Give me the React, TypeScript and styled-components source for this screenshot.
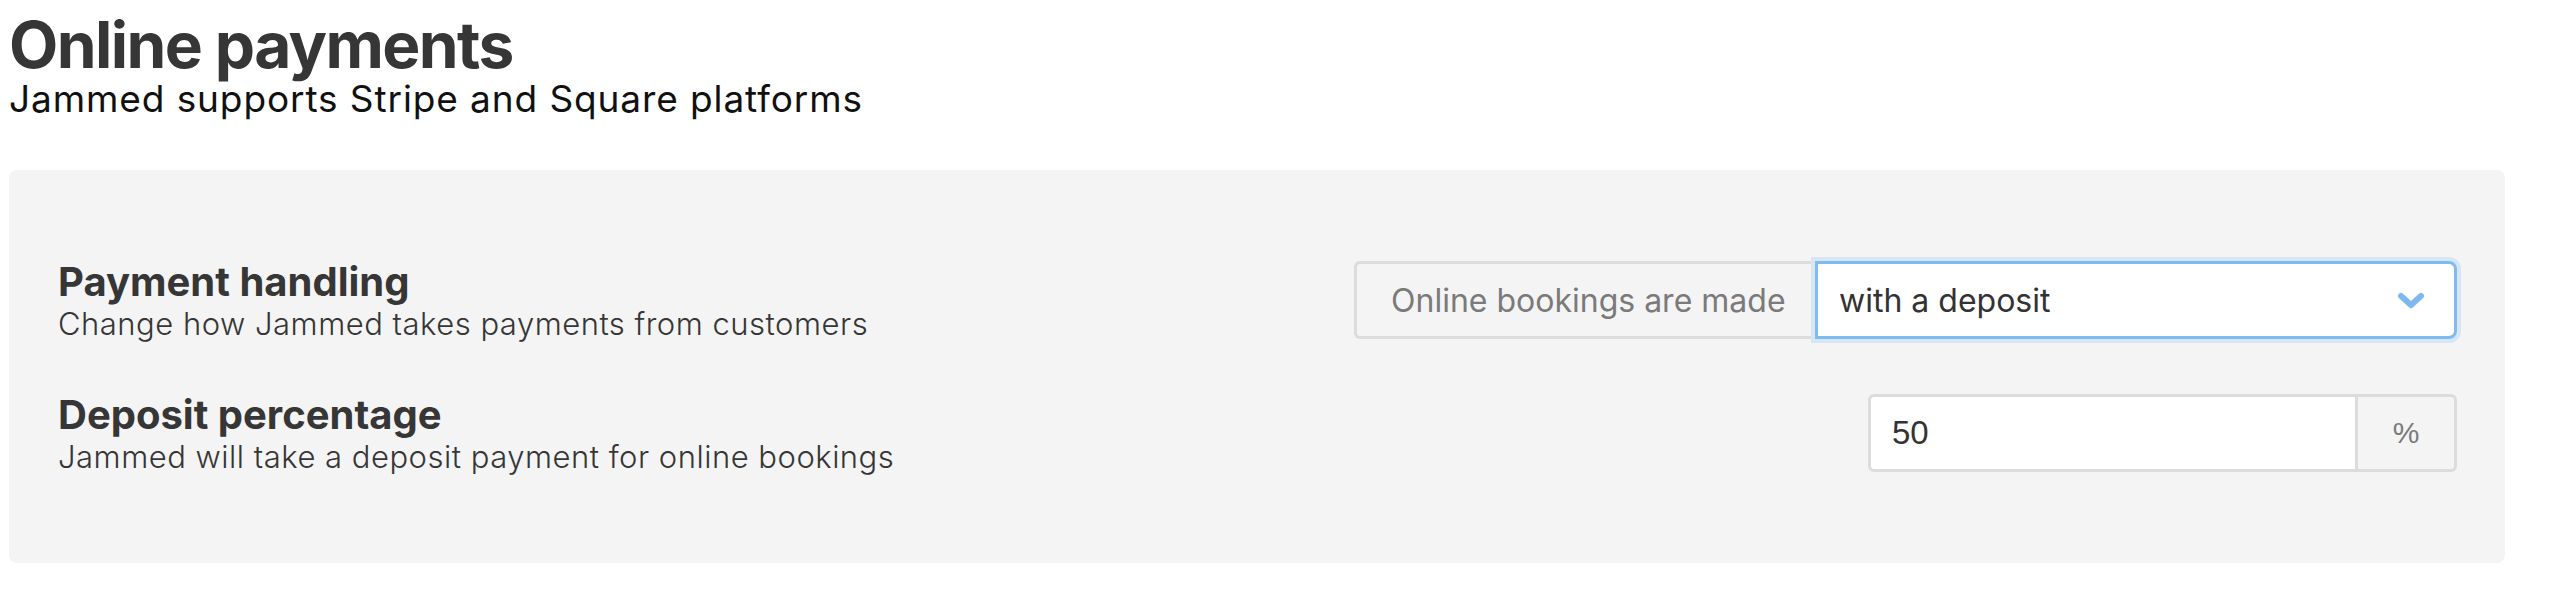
import styled, { createGlobalStyle } from "styled-components";

const GlobalStyle = createGlobalStyle`
  body {
    margin: 0;
    background: #ffffff;
    font-family: Inter, "Noto Sans", sans-serif;
    color: #363636;
  }
`;

const Page = styled.div`
  width: 2496px;
  padding: 9px 0 0 9px;
`;

const Header = styled.header`
  margin-bottom: 53px;
`;

const Title = styled.h1`
  margin: 0;
  font-size: 64px;
  line-height: 72px;
  font-weight: 700;
  letter-spacing: -1.6px;
  color: #363636;
`;

const Subtitle = styled.p`
  margin: 0;
  font-size: 37px;
  line-height: 36px;
  font-weight: 400;
  letter-spacing: 0.9px;
  color: #111111;
`;

const Panel = styled.section`
  background: #f4f4f4;
  border-radius: 8px;
  padding: 88px 48px 88px 49px;
  display: flex;
  flex-direction: column;
  gap: 49px;
`;

const SettingRow = styled.div`
  display: flex;
  align-items: center;
  justify-content: space-between;
`;

const LabelBlock = styled.div`
  display: flex;
  flex-direction: column;
`;

const Label = styled.div`
  font-size: 40px;
  line-height: 47px;
  font-weight: 700;
  color: #363636;
`;

const Description = styled.div`
  font-size: 31px;
  line-height: 37px;
  font-weight: 300;
  letter-spacing: 0.5px;
  color: #363636;
`;

const InputGroup = styled.div`
  display: flex;
  align-items: stretch;
  height: 78px;
`;

const Prefix = styled.div`
  display: flex;
  align-items: center;
  box-sizing: border-box;
  width: 461px;
  padding: 0 34px;
  background: #f4f4f4;
  border: 3px solid #dcdcdc;
  border-right: none;
  border-radius: 6px 0 0 6px;
  font-size: 32px;
  color: #7a7a7a;
  white-space: nowrap;
`;

const SelectWrap = styled.div`
  position: relative;
  width: 642px;
  z-index: 1;
`;

const Select = styled.select`
  appearance: none;
  box-sizing: border-box;
  width: 100%;
  height: 100%;
  margin: 0;
  padding: 0 80px 0 21px;
  background: #ffffff;
  border: 3px solid #7fbaf0;
  border-radius: 0 8px 8px 0;
  box-shadow: 0 0 0 4px #d6e6f5;
  outline: none;
  font-family: Inter, "Noto Sans", sans-serif;
  font-size: 32px;
  color: #333333;
`;

const Chevron = styled.svg`
  position: absolute;
  right: 32px;
  top: 50%;
  width: 28px;
  height: 18px;
  transform: translateY(-50%);
  pointer-events: none;
`;

const NumberInput = styled.input`
  box-sizing: border-box;
  width: 490px;
  height: 100%;
  margin: 0;
  padding: 0 21px;
  background: #ffffff;
  border: 3px solid #dcdcdc;
  border-radius: 6px 0 0 6px;
  outline: none;
  font-family: "Liberation Sans", Arial, sans-serif;
  font-size: 33px;
  color: #333333;
`;

const Suffix = styled.div`
  display: flex;
  align-items: center;
  justify-content: center;
  box-sizing: border-box;
  width: 99px;
  background: #f4f4f4;
  border: 3px solid #dcdcdc;
  border-left: none;
  border-radius: 0 6px 6px 0;
  font-family: "Liberation Sans", Arial, sans-serif;
  font-size: 30px;
  color: #7a7a7a;
`;

export default function App() {
  return (
    <>
      <GlobalStyle />
      <Page>
        <Header>
          <Title>Online payments</Title>
          <Subtitle>Jammed supports Stripe and Square platforms</Subtitle>
        </Header>
        <Panel>
          <SettingRow>
            <LabelBlock>
              <Label>Payment handling</Label>
              <Description>Change how Jammed takes payments from customers</Description>
            </LabelBlock>
            <InputGroup>
              <Prefix>Online bookings are made</Prefix>
              <SelectWrap>
                <Select defaultValue="deposit">
                  <option value="full">in full</option>
                  <option value="deposit">with a deposit</option>
                  <option value="none">without payment</option>
                </Select>
                <Chevron viewBox="0 0 28 18" fill="none">
                  <path
                    d="M4 5l10 9 10-9"
                    stroke="#7fb8ee"
                    strokeWidth="6"
                    strokeLinecap="round"
                    strokeLinejoin="round"
                  />
                </Chevron>
              </SelectWrap>
            </InputGroup>
          </SettingRow>
          <SettingRow>
            <LabelBlock>
              <Label>Deposit percentage</Label>
              <Description>Jammed will take a deposit payment for online bookings</Description>
            </LabelBlock>
            <InputGroup>
              <NumberInput type="text" defaultValue="50" />
              <Suffix>%</Suffix>
            </InputGroup>
          </SettingRow>
        </Panel>
      </Page>
    </>
  );
}
